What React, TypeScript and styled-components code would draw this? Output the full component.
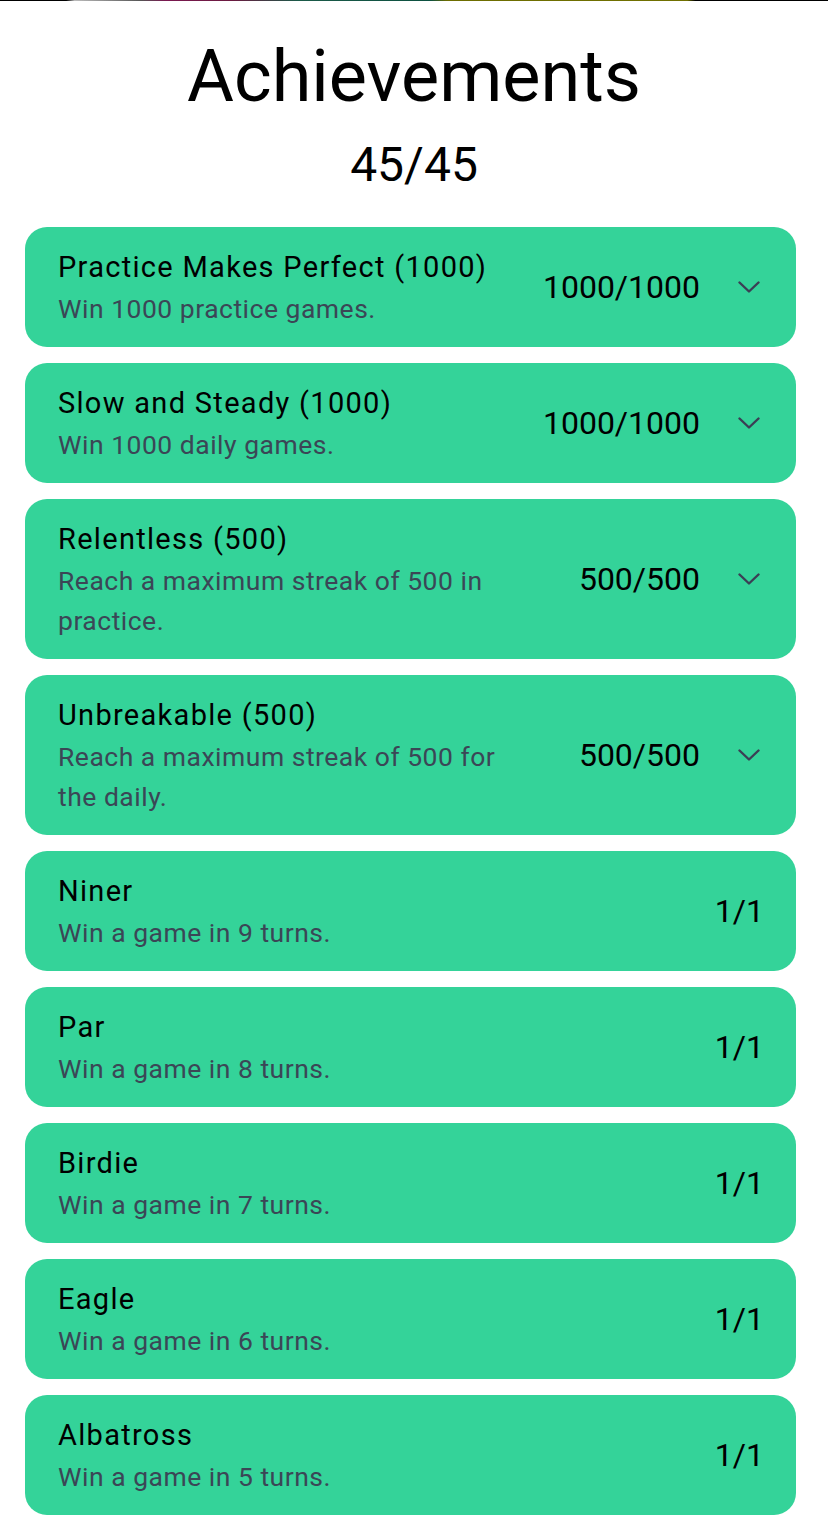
import React from 'react';
import styled, { createGlobalStyle } from 'styled-components';

const GlobalStyle = createGlobalStyle`
  html, body {
    margin: 0;
    padding: 0;
    background: #fff;
  }
  body {
    font-family: Roboto, 'Noto Sans', sans-serif;
    color: #000;
  }
`;

const achievements = [
  { title: 'Practice Makes Perfect (1000)', desc: 'Win 1000 practice games.', progress: '1000/1000', expandable: true },
  { title: 'Slow and Steady (1000)', desc: 'Win 1000 daily games.', progress: '1000/1000', expandable: true },
  { title: 'Relentless (500)', desc: 'Reach a maximum streak of 500 in practice.', progress: '500/500', expandable: true },
  { title: 'Unbreakable (500)', desc: 'Reach a maximum streak of 500 for the daily.', progress: '500/500', expandable: true },
  { title: 'Niner', desc: 'Win a game in 9 turns.', progress: '1/1' },
  { title: 'Par', desc: 'Win a game in 8 turns.', progress: '1/1' },
  { title: 'Birdie', desc: 'Win a game in 7 turns.', progress: '1/1' },
  { title: 'Eagle', desc: 'Win a game in 6 turns.', progress: '1/1' },
  { title: 'Albatross', desc: 'Win a game in 5 turns.', progress: '1/1' },
];

const StatusStrip = styled.div`
  height: 1px;
  background: linear-gradient(
    90deg,
    #000 0%,
    #000 8%,
    #bbb 9%,
    #555 17%,
    #7a1850 20%,
    #6b1a40 28%,
    #1b5a48 36%,
    #0c5040 52%,
    #6d6d00 54%,
    #707000 83%,
    #000 84%,
    #000 100%
  );
`;

const Page = styled.div`
  display: flex;
  flex-direction: column;
  align-items: center;
  padding-bottom: 40px;
`;

const Heading = styled.h1`
  margin: 26px 0 0;
  font-size: 72px;
  font-weight: 400;
  line-height: 100px;
`;

const Total = styled.div`
  font-size: 48px;
  line-height: 64px;
  margin-top: 6px;
`;

const List = styled.div`
  display: flex;
  flex-direction: column;
  gap: 16px;
  width: 771px;
  margin: 30px 32px 0 25px;
  align-self: flex-start;
`;

const Card = styled.div`
  display: flex;
  align-items: center;
  gap: 40px;
  background: #34d399;
  border-radius: 22px;
  padding: 18px 32px 18px 33px;
`;

const Info = styled.div`
  flex: 1;
  min-width: 0;
  max-width: 475px;
  margin-right: auto;
`;

const Title = styled.div`
  font-size: 29px;
  line-height: 44px;
  letter-spacing: 1.3px;
  color: #000;
`;

const Desc = styled.div`
  font-size: 26.5px;
  line-height: 40px;
  letter-spacing: 0.5px;
  color: #3b4656;
`;

const Right = styled.div`
  display: flex;
  align-items: center;
  gap: 38px;
  flex-shrink: 0;
`;

const Progress = styled.span`
  font-size: 32px;
  line-height: 40px;
  color: #000;
`;

const ChevronIcon = styled.svg`
  display: block;
  margin-right: 4px;
`;

const Chevron = () => (
  <ChevronIcon width="22" height="12" viewBox="0 0 22 12" fill="none">
    <polyline
      points="1.5,1.5 11,10.5 20.5,1.5"
      stroke="#3b3f55"
      strokeWidth="2.4"
      strokeLinecap="round"
      strokeLinejoin="round"
    />
  </ChevronIcon>
);

export default function App() {
  return (
    <>
      <GlobalStyle />
      <StatusStrip />
      <Page>
        <Heading>Achievements</Heading>
        <Total>45/45</Total>
        <List>
          {achievements.map((a) => (
            <Card key={a.title}>
              <Info>
                <Title>{a.title}</Title>
                <Desc>{a.desc}</Desc>
              </Info>
              <Right>
                <Progress>{a.progress}</Progress>
                {a.expandable && <Chevron />}
              </Right>
            </Card>
          ))}
        </List>
      </Page>
    </>
  );
}
